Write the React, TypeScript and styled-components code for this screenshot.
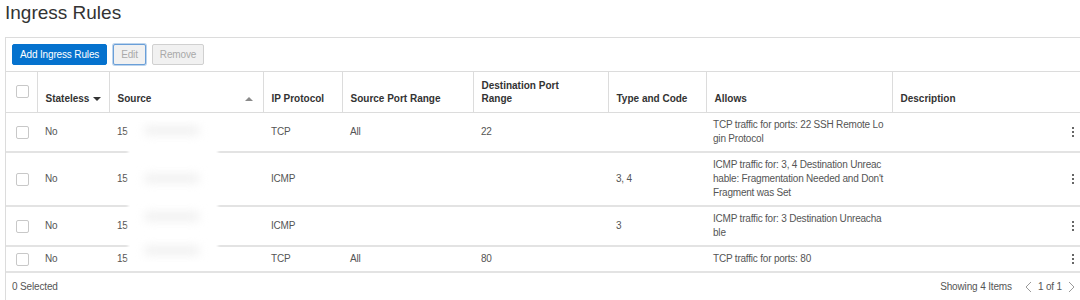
import * as React from 'react';
import styled, { createGlobalStyle } from 'styled-components';

const GlobalStyle = createGlobalStyle`
  body {
    margin: 0;
    background: #ffffff;
    font-family: "Liberation Sans", Arial, sans-serif;
    color: #555555;
  }
`;

interface Rule {
  stateless: string;
  source: string;
  protocol: string;
  sourcePorts: string;
  destPorts: string;
  typeCode: string;
  allows: string;
}

const rules: Rule[] = [
  {
    stateless: 'No',
    source: '15',
    protocol: 'TCP',
    sourcePorts: 'All',
    destPorts: '22',
    typeCode: '',
    allows: 'TCP traffic for ports: 22 SSH Remote Login Protocol',
  },
  {
    stateless: 'No',
    source: '15',
    protocol: 'ICMP',
    sourcePorts: '',
    destPorts: '',
    typeCode: '3, 4',
    allows:
      "ICMP traffic for: 3, 4 Destination Unreachable: Fragmentation Needed and Don't Fragment was Set",
  },
  {
    stateless: 'No',
    source: '15',
    protocol: 'ICMP',
    sourcePorts: '',
    destPorts: '',
    typeCode: '3',
    allows: 'ICMP traffic for: 3 Destination Unreachable',
  },
  {
    stateless: 'No',
    source: '15',
    protocol: 'TCP',
    sourcePorts: 'All',
    destPorts: '80',
    typeCode: '',
    allows: 'TCP traffic for ports: 80',
  },
];

const Page = styled.div`
  padding-left: 5px;
  width: 1075px;
  overflow: hidden;
`;

const Title = styled.h1`
  margin: 0 0 11px 0;
  font-size: 19px;
  font-weight: normal;
  line-height: 26px;
  color: #333333;
`;

const Panel = styled.div`
  border-top: 1px solid #dcdcdc;
  border-left: 1px solid #dcdcdc;
  width: 1100px;
`;

const Toolbar = styled.div`
  display: flex;
  align-items: center;
  gap: 6px;
  padding: 6px;
`;

const Button = styled.button<{ $variant: 'primary' | 'disabled' | 'focused' }>`
  height: 21px;
  padding: 0 7px;
  font-family: "Liberation Sans", Arial, sans-serif;
  font-size: 10px;
  letter-spacing: -0.15px;
  border-radius: 2px;
  cursor: default;
  background: ${({ $variant }) => ($variant === 'primary' ? '#0572ce' : '#f1f1f1')};
  color: ${({ $variant }) => ($variant === 'primary' ? '#ffffff' : '#a9a9a9')};
  border: 1px solid
    ${({ $variant }) =>
      $variant === 'primary' ? '#0572ce' : $variant === 'focused' ? '#6a9fd8' : '#d0d0d0'};
  box-shadow: ${({ $variant }) =>
    $variant === 'focused' ? '0 0 0 1px rgba(106, 159, 216, 0.45)' : 'none'};
`;

const TableWrap = styled.div`
  position: relative;
`;

const Table = styled.table`
  border-collapse: collapse;
  table-layout: fixed;
  width: 1100px;
  border-top: 1px solid #dcdcdc;
`;

const HeadCell = styled.th`
  text-align: left;
  vertical-align: bottom;
  height: 33px;
  padding: 0 8px 7px 8px;
  font-size: 10px;
  line-height: 13px;
  font-weight: bold;
  color: #333333;
  white-space: nowrap;
  border-left: 1px solid #dcdcdc;
  border-bottom: 1px solid #dcdcdc;
  &:first-child {
    border-left: none;
  }
`;

const HeadInner = styled.div`
  display: flex;
  align-items: center;
  justify-content: space-between;
`;

const Row = styled.tr`
  border-bottom: 2px solid #e3e3e3;
`;

const Cell = styled.td<{ $wrap?: boolean }>`
  padding: 5px ${({ $wrap }) => ($wrap ? '7px' : '8px')} 5px
    ${({ $wrap }) => ($wrap ? '7px' : '8px')};
  font-size: 10px;
  letter-spacing: -0.2px;
  line-height: 14px;
  color: #555555;
  vertical-align: middle;
  word-break: ${({ $wrap }) => ($wrap ? 'break-all' : 'normal')};
`;

const CheckCell = styled.td`
  padding: 0 0 0 10px;
  vertical-align: middle;
`;

const CheckBox = styled.span`
  display: block;
  width: 11px;
  height: 11px;
  border: 1px solid #c8c8c8;
  border-radius: 2px;
  background: #ffffff;
`;

const HeadCheck = styled(CheckBox)`
  margin: 0 0 7px 2px;
`;

const SortDown = styled.span`
  display: inline-block;
  margin-left: 4px;
  width: 0;
  height: 0;
  border-left: 4px solid transparent;
  border-right: 4px solid transparent;
  border-top: 4px solid #333333;
  vertical-align: middle;
`;

const SortUp = styled.span`
  display: inline-block;
  width: 0;
  height: 0;
  border-left: 4px solid transparent;
  border-right: 4px solid transparent;
  border-bottom: 4px solid #8a8a8a;
  margin-right: 2px;
`;

const MenuCell = styled.td`
  padding: 0;
  vertical-align: middle;
`;

const Kebab = styled.div`
  display: flex;
  flex-direction: column;
  gap: 2px;
  width: 2px;
  margin-left: auto;
  margin-right: 32px;
  span {
    display: block;
    width: 2px;
    height: 2px;
    background: #333333;
    border-radius: 1px;
  }
`;

const Redaction = styled.div`
  position: absolute;
  left: 124px;
  top: 49px;
  width: 86px;
  height: 142px;
  background: #ffffff;
  box-shadow: 0 0 3px 2px #ffffff;
  overflow: hidden;
`;

const Smudge = styled.div`
  position: absolute;
  left: 14px;
  width: 56px;
  height: 9px;
  border-radius: 6px;
  background: #f0f0f0;
  filter: blur(5px);
`;

const Footer = styled.div`
  display: flex;
  align-items: center;
  justify-content: space-between;
  height: 27px;
  padding: 0 4px 0 6px;
  width: 1064px;
  font-size: 10px;
  letter-spacing: -0.15px;
  color: #555555;
`;

const Pager = styled.div`
  display: flex;
  align-items: center;
  gap: 5px;
`;

const PagerText = styled.span`
  margin-right: 7px;
`;

const Chevron = styled.svg`
  width: 9px;
  height: 12px;
`;

const cols = [31, 72, 154, 79, 131, 135, 98, 186, 140, 74];

const App: React.FC = () => (
  <Page>
    <GlobalStyle />
    <Title>Ingress Rules</Title>
    <Panel>
      <Toolbar>
        <Button $variant="primary">Add Ingress Rules</Button>
        <Button $variant="focused">Edit</Button>
        <Button $variant="disabled">Remove</Button>
      </Toolbar>
      <TableWrap>
        <Table>
          <colgroup>
            {cols.map((w, i) => (
              <col key={i} style={{ width: w }} />
            ))}
          </colgroup>
          <thead>
            <tr>
              <HeadCell>
                <HeadCheck />
              </HeadCell>
              <HeadCell>
                Stateless
                <SortDown />
              </HeadCell>
              <HeadCell>
                <HeadInner>
                  Source
                  <SortUp />
                </HeadInner>
              </HeadCell>
              <HeadCell>IP Protocol</HeadCell>
              <HeadCell>Source Port Range</HeadCell>
              <HeadCell>
                Destination Port
                <br />
                Range
              </HeadCell>
              <HeadCell>Type and Code</HeadCell>
              <HeadCell>Allows</HeadCell>
              <HeadCell colSpan={2}>Description</HeadCell>
            </tr>
          </thead>
          <tbody>
            {rules.map((r, i) => (
              <Row key={i}>
                <CheckCell>
                  <CheckBox />
                </CheckCell>
                <Cell>{r.stateless}</Cell>
                <Cell>{r.source}</Cell>
                <Cell>{r.protocol}</Cell>
                <Cell>{r.sourcePorts}</Cell>
                <Cell>{r.destPorts}</Cell>
                <Cell>{r.typeCode}</Cell>
                <Cell $wrap>{r.allows}</Cell>
                <Cell />
                <MenuCell>
                  <Kebab>
                    <span />
                    <span />
                    <span />
                  </Kebab>
                </MenuCell>
              </Row>
            ))}
          </tbody>
        </Table>
        <Redaction>
          <Smudge style={{ top: 6 }} />
          <Smudge style={{ top: 54 }} />
          <Smudge style={{ top: 92 }} />
          <Smudge style={{ top: 126 }} />
        </Redaction>
      </TableWrap>
      <Footer>
        <span>0 Selected</span>
        <Pager>
          <PagerText>Showing 4 Items</PagerText>
          <Chevron viewBox="0 0 9 12">
            <path d="M7 1 L2 6 L7 11" fill="none" stroke="#9a9a9a" strokeWidth="1" />
          </Chevron>
          <span>1 of 1</span>
          <Chevron viewBox="0 0 9 12">
            <path d="M2 1 L7 6 L2 11" fill="none" stroke="#9a9a9a" strokeWidth="1" />
          </Chevron>
        </Pager>
      </Footer>
    </Panel>
  </Page>
);

export default App;
